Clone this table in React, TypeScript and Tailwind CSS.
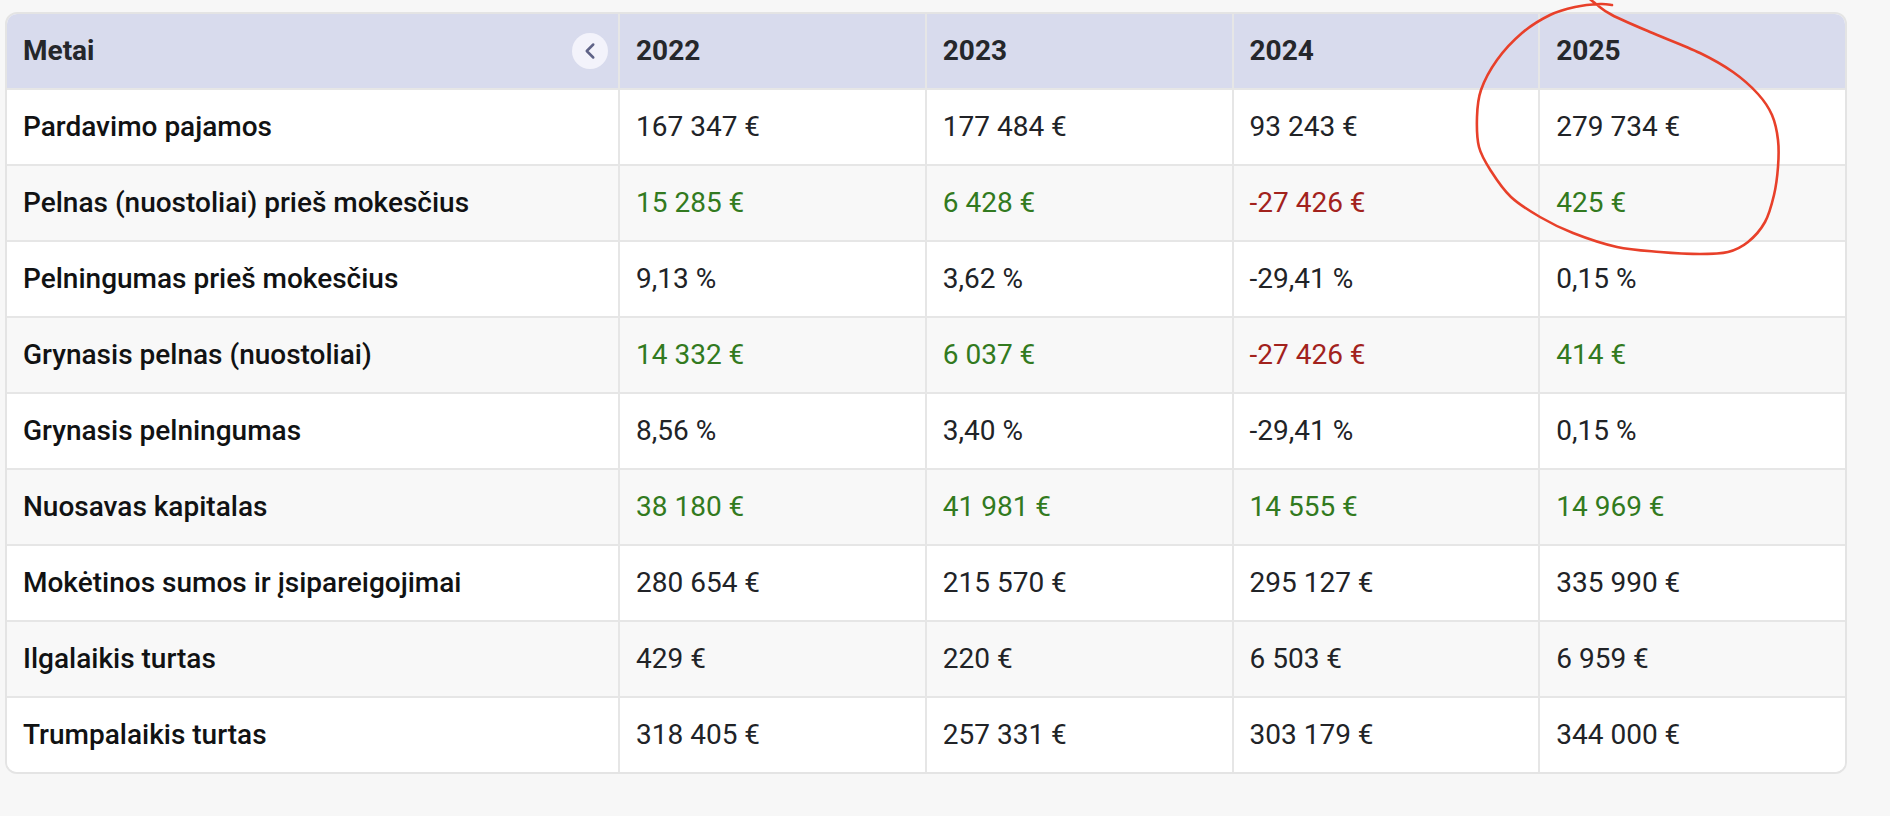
import React from "react";
import { ChevronLeft } from "lucide-react";

type Tone = "n" | "g" | "r";
type Row = { label: string; values: [string, Tone][] };

const rows: Row[] = [
  { label: "Pardavimo pajamos", values: [["167 347 €", "n"], ["177 484 €", "n"], ["93 243 €", "n"], ["279 734 €", "n"]] },
  { label: "Pelnas (nuostoliai) prieš mokesčius", values: [["15 285 €", "g"], ["6 428 €", "g"], ["-27 426 €", "r"], ["425 €", "g"]] },
  { label: "Pelningumas prieš mokesčius", values: [["9,13 %", "n"], ["3,62 %", "n"], ["-29,41 %", "n"], ["0,15 %", "n"]] },
  { label: "Grynasis pelnas (nuostoliai)", values: [["14 332 €", "g"], ["6 037 €", "g"], ["-27 426 €", "r"], ["414 €", "g"]] },
  { label: "Grynasis pelningumas", values: [["8,56 %", "n"], ["3,40 %", "n"], ["-29,41 %", "n"], ["0,15 %", "n"]] },
  { label: "Nuosavas kapitalas", values: [["38 180 €", "g"], ["41 981 €", "g"], ["14 555 €", "g"], ["14 969 €", "g"]] },
  { label: "Mokėtinos sumos ir įsipareigojimai", values: [["280 654 €", "n"], ["215 570 €", "n"], ["295 127 €", "n"], ["335 990 €", "n"]] },
  { label: "Ilgalaikis turtas", values: [["429 €", "n"], ["220 €", "n"], ["6 503 €", "n"], ["6 959 €", "n"]] },
  { label: "Trumpalaikis turtas", values: [["318 405 €", "n"], ["257 331 €", "n"], ["303 179 €", "n"], ["344 000 €", "n"]] },
];

const toneClass: Record<Tone, string> = {
  n: "text-[#212327]",
  g: "text-[#327a20]",
  r: "text-[#a2221d]",
};

const pts: [number, number][] = [
  [1584, -6], [1596, 4], [1612, 15], [1650, 32], [1700, 53], [1733, 72], [1758, 94], [1772, 115],
  [1778, 140], [1778, 167], [1774, 195], [1765, 222], [1748, 242], [1728, 252], [1700, 254],
  [1660, 252], [1617, 247], [1573, 233], [1540, 217], [1511, 197], [1491, 171], [1479, 147],
  [1477, 117], [1481, 90], [1497, 60], [1522, 33], [1550, 15], [1575, 7], [1600, 4], [1612, 5],
];

function smoothPath(p: [number, number][]): string {
  let d = `M ${p[0][0]} ${p[0][1]}`;
  for (let i = 0; i < p.length - 1; i++) {
    const p0 = p[i - 1] || p[i];
    const p1 = p[i];
    const p2 = p[i + 1];
    const p3 = p[i + 2] || p2;
    const c1x = p1[0] + (p2[0] - p0[0]) / 6;
    const c1y = p1[1] + (p2[1] - p0[1]) / 6;
    const c2x = p2[0] - (p3[0] - p1[0]) / 6;
    const c2y = p2[1] - (p3[1] - p1[1]) / 6;
    d += ` C ${c1x.toFixed(1)} ${c1y.toFixed(1)} ${c2x.toFixed(1)} ${c2y.toFixed(1)} ${p2[0]} ${p2[1]}`;
  }
  return d;
}

export default function App() {
  return (
    <div
      className="relative h-[816px] w-[1890px] overflow-hidden bg-[#f7f7f7] pl-[5px] pt-[12px]"
      style={{ fontFamily: "Roboto, 'Noto Sans', Arial, sans-serif" }}
    >
      <div className="w-[1842px] overflow-hidden rounded-[12px] border-2 border-[#e4e4e4] bg-white">
        {/* header */}
        <div className="grid h-[76px] grid-cols-[611px_repeat(4,1fr)] border-b-2 border-[#e6e6e6] bg-[#d8dbed] text-[28px] font-bold text-[#25272b]">
          <div className="flex items-center justify-between pl-4 pr-[10px]">
            <span>Metai</span>
            <span className="flex h-[36px] w-[36px] items-center justify-center rounded-full bg-[#f3f3fb]">
              <ChevronLeft size={26} strokeWidth={2.3} className="text-[#5f6387]" />
            </span>
          </div>
          {["2022", "2023", "2024", "2025"].map((y) => (
            <div key={y} className="flex items-center border-l-2 border-[#e6e6e6] pl-4">
              {y}
            </div>
          ))}
        </div>
        {rows.map((r, i) => (
          <div
            key={r.label}
            className={
              "grid grid-cols-[611px_repeat(4,1fr)] text-[28px] " +
              (i > 0 ? "h-[76px] border-t-2 border-[#e6e6e6] " : "h-[74px] ") +
              (i % 2 === 1 ? "bg-[#f8f8f8]" : "bg-white")
            }
          >
            <div className="flex items-center pl-4 font-medium text-[#111213]">{r.label}</div>
            {r.values.map(([v, t], j) => (
              <div key={j} className={"flex items-center border-l-2 border-[#e6e6e6] pl-4 " + toneClass[t]}>
                {v}
              </div>
            ))}
          </div>
        ))}
      </div>
      <svg
        className="pointer-events-none absolute left-0 top-0"
        width={1890}
        height={816}
        viewBox="0 0 1890 816"
      >
        <path d={smoothPath(pts)} fill="none" stroke="#e8402a" strokeWidth={2.6} strokeLinecap="round" strokeLinejoin="round" />
      </svg>
    </div>
  );
}
